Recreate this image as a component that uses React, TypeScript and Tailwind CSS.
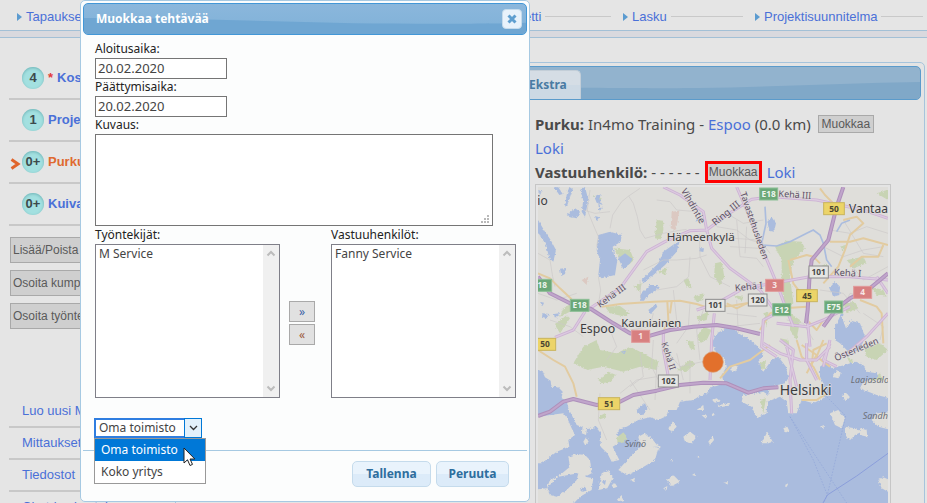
import React from "react";

const humanist = "font-['Noto_Sans','Open_Sans',sans-serif]";

function NavItem({ label, className }: { label: string; className: string }) {
  return (
    <li className={`flex items-center ${className}`}>
      <span className="mr-1 h-0 w-0 border-y-4 border-l-5 border-y-transparent border-l-[#5b9bd0]" />
      <a href="#" className="text-[13px] leading-4 text-[#4a70d8]">{label}</a>
      <span className="ml-1 h-px flex-1 bg-[#c9c9c9]" />
    </li>
  );
}

function Stage({ count, label, active, required }: { count: string; label: string; active?: boolean; required?: boolean }) {
  return (
    <li className="flex h-[42px] items-center border-b-2 border-[#c8c8c8]">
      <span className="flex w-[13px] items-center pt-1">
        {active && (
          <svg width="11" height="12" viewBox="0 0 11 12" className="ml-px">
            <path d="M1.5 1.5 L8 6 L1.5 10.5" fill="none" stroke="#e0652c" strokeWidth="3" />
          </svg>
        )}
      </span>
      <span className="flex size-[22px] items-center justify-center rounded-full bg-[#a3e0e0] text-[13px] font-bold text-[#3c4a4c] shadow-[inset_0_1px_3px_#6fb3b6]">
        {count}
      </span>
      {required && <span className="ml-1 text-[13px] font-bold text-[#e23b3b]">*</span>}
      <a href="#" className={`ml-1 text-[13px] font-bold ${active ? "text-[#df6a30]" : "text-[#4a70d8]"}`}>{label}</a>
    </li>
  );
}

function Chevron({ up, color }: { up?: boolean; color: string }) {
  return (
    <svg width="10" height="7" viewBox="0 0 10 7">
      <path d={up ? "M1.5 5.5 L5 2 L8.5 5.5" : "M1.5 1.5 L5 5 L8.5 1.5"} fill="none" stroke={color} strokeWidth="2" />
    </svg>
  );
}

function PeopleList({ id, label, person }: { id: string; label: string; person: string }) {
  return (
    <div className="w-[185px]">
      <label htmlFor={id} className="block h-[18px] leading-[18px]">{label}</label>
      <div className="flex h-[154px] border border-[#7f7f88] bg-white">
        <select id={id} size={8} className="h-full min-w-0 flex-1 appearance-none overflow-hidden bg-none pl-px text-[12px] text-[#444] outline-none">
          <option className="h-[18px] px-[2px] leading-[18px]">{person}</option>
        </select>
        <div className="flex w-4 flex-col items-center justify-between bg-[#f0f0f0] py-[5px]">
          <Chevron up color="#bcbcbc" />
          <Chevron color="#bcbcbc" />
        </div>
      </div>
    </div>
  );
}

type Shield = { x: number; y: number; w: number; t: string; k: "g" | "y" | "r" | "w" };
const shields: Shield[] = [
  { x: 30, y: 317, w: 70, t: "E18", k: "g" },
  { x: 149, y: 377, w: 56, t: "E18", k: "g" },
  { x: 556, y: 377, w: 58, t: "101", k: "w" },
  { x: 332, y: 470, w: 54, t: "1", k: "r" },
  { x: 45, y: 494, w: 64, t: "50", k: "y" },
  { x: 716, y: 43, w: 54, t: "E18", k: "g" },
  { x: 912, y: 87, w: 62, t: "50", k: "y" },
  { x: 866, y: 277, w: 58, t: "101", k: "w" },
  { x: 734, y: 317, w: 54, t: "3", k: "r" },
  { x: 683, y: 361, w: 56, t: "120", k: "w" },
  { x: 831, y: 348, w: 62, t: "45", k: "y" },
  { x: 755, y: 390, w: 54, t: "E12", k: "g" },
  { x: 911, y: 382, w: 54, t: "E75", k: "g" },
  { x: 998, y: 338, w: 54, t: "4", k: "r" },
  { x: 415, y: 604, w: 60, t: "102", k: "w" },
  { x: 237, y: 672, w: 64, t: "51", k: "y" },
];
const shieldFill = { g: "#6ba878", y: "#ecd468", r: "#d88080", w: "#e6e6e3" };
const shieldStroke = { g: "#8cbf95", y: "#c9b45c", r: "#e29a9a", w: "#8d8d8d" };
const shieldText = { g: "#eef5ee", y: "#4a4632", r: "#f7e6e6", w: "#484848" };

const minorRoads = [
  "M240 145 L248 105 L275 65 L296 48 L310 70 L322 110 L330 150 L345 175",
  "M180 30 L172 90 L188 130 L205 170 L200 200",
  "M24 220 L60 240 L68 290 L75 320",
  "M205 290 L212 330 L205 375", "M296 48 L330 25", "M160 90 L195 100 L240 95",
  "M345 175 L400 160 L455 150 L470 148", "M340 270 L400 240 L440 240 L500 235 L530 225",
  "M380 60 L420 65 L440 90 L500 95", "M480 230 L476 290 L440 320 L380 330",
  "M508 160 L510 230 L540 290 L600 320", "M560 140 L620 150 L660 180 L700 190",
  "M590 100 L640 130 L700 120", "M620 120 L630 230 L680 235 L700 260",
  "M650 140 L645 220", "M600 200 L690 205", "M610 175 L690 180 L720 220",
  "M330 300 L332 360", "M430 330 L440 420", "M480 370 L475 440 L440 490", "M370 400 L360 440 L300 450",
  "M520 390 L500 450 L510 540", "M620 360 L625 460", "M590 400 L680 410", "M600 440 L690 430",
  "M370 480 L365 560 L395 620", "M400 500 L450 560 L540 540", "M330 520 L340 590 L300 620",
  "M210 640 L205 720 L230 780", "M270 640 L320 600 L380 590", "M300 600 L360 690",
  "M380 560 L375 660", "M440 520 L460 600", "M480 540 L480 640",
  "M770 420 L820 430 L850 480", "M900 150 L960 160 L1010 140 L1074 160", "M940 120 L1000 220 L1060 230",
  "M960 250 L1000 300 L1074 260", "M870 330 L940 340 L990 400", "M1000 400 L1060 440 L1050 480",
  "M930 400 L960 340 L1000 350", "M880 200 L940 230 L1000 210 L1060 200",
  "M24 340 L80 360 L140 340", "M60 420 L120 440 L160 470", "M240 450 L260 500 L230 540",
];

const yellowRoads = [
  "M24 280 L60 295 L90 325 L125 358",
  "M215 380 L270 372 L370 365 L450 362 L500 372 L530 382 L600 378 L650 370 L680 368",
  "M412 365 L415 420 L402 450", "M425 365 L420 400",
  "M24 510 L70 540 L105 560 L130 610 L140 650",
  "M780 240 L830 225 L850 230 L870 250", "M775 240 L790 310 L820 350",
  "M900 185 L960 185 L1000 175 L1074 195", "M870 25 L885 45 L910 70",
  "M940 120 L980 110 L1000 130 L960 165 L945 210 L925 260 L880 310",
  "M1060 195 L1045 230 L995 230 L960 260", "M830 380 L760 385 L720 400 L690 450",
  "M830 420 L860 450 L880 420 L930 395", "M570 595 L600 560 L660 540 L700 510 L720 495",
  "M800 480 L815 530 L850 560 L870 600", "M815 495 L860 525 L830 580", "M880 480 L860 530 L900 560",
  "M815 660 L860 660 L890 640", "M890 490 L850 510 L845 560", "M990 360 L1040 380 L1055 400 L1060 490",
  "M650 370 L620 385 L590 370",
];

const pinkRoads = [
  "M183 383 L270 325 L350 215 L405 185 L480 152 L530 150 L590 105 L665 58 L730 50 L860 60 L1000 90 L1074 115",
  "M400 21 L450 45 L520 95 L530 150", "M530 150 L545 205 L600 265 L690 330 L740 400",
  "M620 21 L650 90 L690 190 L740 310 L770 390 L790 440",
  "M500 390 L560 370 L640 325 L730 310 L840 290 L960 290 L1074 300",
  "M553 400 L545 480 L540 600", "M165 395 L130 450 L75 472",
  "M740 400 L700 420 L695 500 L740 530", "M740 430 L830 440 L880 420 L960 380",
  "M400 455 L400 510 L415 590", "M700 490 L750 520 L810 540 L860 540 L900 500",
  "M830 490 L830 540 L860 600", "M770 500 L800 620", "M750 480 L790 510 L780 600 L785 700",
  "M900 490 L880 540 L920 560", "M880 560 L900 480", "M940 530 L1010 470 L1074 400",
  "M1040 290 L1074 340", "M830 400 L840 500",
];

const motorways = [
  "M24 290 L60 340 L120 370 L183 387 L250 430 L300 460 L350 470 L420 450 L490 440 L560 435 L620 445 L690 462",
  "M24 708 L60 695 L100 665 L130 657 L200 675 L270 665 L310 645 L380 632 L450 615 L520 608 L590 610 L655 638 L700 625 L745 622",
  "M940 21 L920 80 L895 180 L845 240 L838 300 L833 390 L828 430",
  "M1074 280 L1020 325 L960 355 L920 385 L880 440",
];

const islands = [
  "M460 770 L480 755 L500 770 L485 790 L465 785 Z", "M415 745 L430 722 L440 740 L425 755 Z",
  "M265 870 L310 820 L345 790 L385 805 L375 840 L325 870 L290 885 Z",
  "M325 770 L345 760 L365 775 L385 800 L360 800 L330 790 Z",
  "M410 900 L430 885 L450 905 L425 918 Z", "M535 785 L548 768 L552 780 L540 795 Z", "M500 690 L520 675 L522 690 Z",
  "M545 705 L550 698 L556 708 Z", "M515 706 L530 704 L528 716 Z", "M563 675 L600 668 L597 677 L570 682 Z",
  "M160 785 L168 772 L176 785 L165 795 Z", "M205 930 L215 880 L235 870 L248 895 L232 925 Z",
  "M695 790 L712 755 L728 785 L715 790 Z", "M760 745 L772 740 L778 752 L766 758 Z",
  "M900 700 L925 690 L945 715 L935 745 L915 735 Z", "M945 740 L975 745 L995 755 L975 765 L960 780 L945 765 Z",
  "M580 908 L594 906 L592 914 Z", "M765 915 L775 910 L770 922 Z", "M486 885 L494 880 L496 888 Z",
  "M905 590 L920 570 L935 580 L925 595 Z", "M935 645 L950 640 L960 652 L945 660 Z",
  "M870 740 L882 735 L880 748 Z", "M545 660 L560 655 L570 664 L555 668 Z", "M655 660 L665 650 L672 662 Z",
  "M1045 900 L1060 892 L1074 898 L1074 935 L1055 925 Z", "M245 915 L255 910 L262 920 L250 925 Z",
  "M300 900 L315 893 L312 906 Z", "M500 830 L506 826 L508 834 Z", "M420 840 L428 836 L428 845 Z",
  "M260 960 L275 945 L280 965 Z", "M380 790 L392 800 L386 812 Z", "M610 555 L625 560 L615 575 L600 570 Z",
  "M990 745 L1010 750 L1012 770 L990 765 Z", "M400 925 L412 918 L410 930 Z",
];

const greens = [
  "M375 175 L380 120 L400 122 L400 150 L392 178 Z", "M250 205 L300 210 L312 240 L295 255 L270 235 Z",
  "M555 250 L575 245 L583 290 L570 315 L552 290 Z", "M460 300 L475 295 L485 325 L470 320 Z",
  "M490 350 L520 340 L520 360 L500 365 Z", "M100 385 L125 370 L130 390 L90 410 Z",
  "M75 435 L110 405 L120 415 L90 460 Z", "M225 380 L270 378 L300 400 L285 410 L240 400 Z",
  "M500 410 L535 395 L530 420 L510 425 Z", "M500 470 L520 440 L545 450 L530 480 L510 490 Z",
  "M130 550 L160 500 L200 480 L210 510 L260 520 L300 500 L330 515 L385 545 L380 570 L330 560 L280 575 L220 560 L170 570 Z",
  "M205 600 L235 575 L258 585 L240 605 L215 610 Z", "M470 480 L490 485 L495 510 L480 505 Z",
  "M440 570 L480 540 L495 550 L470 575 Z", "M60 715 L100 690 L100 705 L75 720 Z",
  "M205 710 L225 700 L228 712 L210 718 Z",
  "M735 200 L770 182 L815 185 L825 205 L790 240 L780 290 L790 370 L770 400 L755 330 L755 240 Z",
  "M930 200 L945 195 L945 215 Z", "M950 240 L1000 230 L1010 250 L970 265 Z", "M870 260 L890 250 L895 265 Z",
  "M700 400 L715 395 L710 440 Z", "M780 400 L810 420 L800 480 L780 450 Z", "M1020 320 L1060 330 L1070 350 L1040 345 Z",
  "M1000 500 L1050 490 L1074 510 L1040 540 L1010 530 Z", "M690 550 L708 540 L705 565 L690 570 Z",
  "M950 530 L970 540 L960 550 Z", "M1020 600 L1050 580 L1060 600 Z", "M990 320 L1010 325 L1000 330 Z",
  "M385 275 L412 262 L405 285 Z", "M310 320 L335 310 L330 335 Z", "M610 345 L640 350 L635 365 Z",
  "M190 45 L215 55 L205 70 Z", "M940 370 L975 365 L985 385 L950 400 Z", "M1040 40 L1074 30 L1074 60 Z",
  "M690 660 L708 655 L700 700 Z", "M750 475 L775 480 L780 505 L765 500 Z",
];

const lakes = [
  "M205 165 L240 155 L275 165 L272 185 L248 200 L252 225 L262 240 L255 285 L215 295 L205 285 L210 240 L200 210 Z",
  "M265 235 L285 220 L308 238 L300 250 L280 268 Z", "M24 120 L45 155 L62 180 L78 210 L70 245 L58 235 L48 195 L30 165 L24 160 Z",
  "M110 105 L135 85 L150 95 L140 115 L120 112 Z", "M150 30 L165 21 L175 60 L165 110 L155 95 L160 60 Z",
  "M118 21 L128 28 L112 75 L105 80 L110 45 Z", "M72 21 L85 22 L98 42 L88 45 Z", "M24 30 L35 35 L30 45 Z",
  "M193 50 L212 42 L208 60 L218 75 L200 68 Z", "M90 266 L108 264 L105 282 L94 288 Z",
  "M370 285 L340 310 L335 300 L385 250 L400 215 L450 180 L440 215 L405 255 Z",
  "M330 345 L360 315 L385 315 L385 325 L355 345 L345 362 L330 362 Z", "M355 390 L378 372 L382 380 L362 402 Z",
  "M508 205 L522 205 L520 216 L508 214 Z", "M38 400 L58 402 L50 415 L36 410 Z", "M72 402 L88 400 L84 412 L74 412 Z",
  "M30 365 L42 368 L38 378 Z", "M712 125 L725 112 L738 130 L732 155 L718 152 Z", "M495 125 L505 110 L512 120 Z",
  "M320 690 L345 670 L352 685 L340 705 L322 700 Z", "M272 515 L288 512 L284 522 Z",
  "M898 325 L915 305 L930 320 L928 345 L910 350 Z", "M205 70 L215 85 L208 95 Z", "M195 108 L208 112 L200 122 Z",
];

const places = [
  { x: 22, y: 75, s: 36, t: "io" }, { x: 410, y: 182, s: 35, t: "Hämeenkylä" }, { x: 150, y: 459, s: 37, t: "Espoo" },
  { x: 274, y: 441, s: 34, t: "Kauniainen" }, { x: 957, y: 99, s: 36, t: "Vantaa" }, { x: 749, y: 644, s: 42, t: "Helsinki" },
];

const roadNames = [
  { t: "Vihdintie", s: 28, m: "translate(452 32) rotate(60)" }, { t: "Ring III", s: 29, m: "translate(556 138) rotate(-39)" },
  { t: "Kehä III", s: 27, m: "translate(210 384) rotate(-36)" }, { t: "Kehä III", s: 27, m: "translate(745 50) rotate(4)" },
  { t: "Tavastehusleden", s: 27, m: "translate(630 40) rotate(71)" }, { t: "Kehä I", s: 28, m: "translate(911 286) rotate(3)" },
  { t: "Kehä I", s: 28, m: "translate(616 334) rotate(-6)" }, { t: "Kehä II", s: 26, m: "translate(394 490) rotate(72)" },
  { t: "Österleden", s: 27, m: "translate(918 544) rotate(-23)" },
];

const areaNames = [
  { x: 284, y: 800, t: "Svinö" }, { x: 962, y: 609, t: "Laajasalo" }, { x: 998, y: 716, t: "Sandhamn" },
];

function CityMap() {
  const land = "#dfdeda";
  const water = "#aabcde";
  return (
    <svg viewBox="24 21 1050 1050" className="block w-full font-['Noto_Sans',sans-serif]">
      <defs>
        <filter id="shoreline" x="0" y="0" width="1" height="1">
          <feTurbulence type="fractalNoise" baseFrequency="0.14" numOctaves="3" seed="4" />
          <feDisplacementMap in="SourceGraphic" scale="9" xChannelSelector="R" yChannelSelector="G" />
        </filter>
      </defs>
      <rect x="24" y="21" width="1050" height="1050" fill={land} />
      <g filter="url(#shoreline)">
        <rect x="0" y="0" width="1100" height="1100" fill={land} />
        <g fill="#c8d4b4">{greens.map((d) => <path key={d} d={d} />)}</g>
        <path d="M425 95 L448 92 L438 150 L422 145 Z M155 300 L175 290 L170 315 Z" fill="#dcc9c2" />
        <g fill={water}>{lakes.map((d) => <path key={d} d={d} />)}</g>
        <path
          fill={water}
          d="M0 568 L36 572 L45 592 L62 602 L64 620 L85 622 L98 635 L95 655 L110 662 L115 685 L140 735 L158 742 L155 760 L168 765 L172 742 L185 750 L198 738 L212 755 L212 800 L232 820 L245 845 L268 840 L258 820 L248 800 L265 790 L270 770 L258 765 L270 745 L290 740 L325 720 L360 712 L385 720 L410 708 L415 690 L440 690 L450 665 L490 660 L505 650 L530 640 L545 620 L560 618 L582 610 L575 585 L590 560 L582 535 L560 520 L545 490 L560 460 L580 450 L600 435 L625 460 L660 480 L690 505 L700 525 L685 545 L700 575 L725 540 L745 530 L768 560 L775 595 L765 610 L720 620 L715 645 L700 635 L680 640 L640 645 L635 665 L665 680 L680 712 L710 700 L712 665 L750 650 L770 665 L775 700 L800 700 L815 660 L850 670 L880 655 L890 630 L870 590 L870 560 L890 545 L905 565 L945 555 L975 545 L1000 555 L1010 575 L1040 580 L1045 590 L1000 605 L990 625 L1015 635 L1040 645 L1100 660 L1100 695 L1040 700 L1025 720 L1045 740 L1100 755 L1100 1100 L0 1100 Z"
        />
        <path d="M915 440 L935 400 L955 420 L990 430 L1005 470 L990 510 L960 520 L930 490 L915 480 Z" fill={water} />
        <path d="M935 410 L950 400 L962 430 L948 445 Z" fill={land} />
        <g fill={land}>
          <path d="M0 715 L60 705 L100 700 L112 715 L125 745 L135 765 L115 780 L118 800 L80 815 L55 835 L35 850 L0 850 Z" />
          <path d="M50 925 L60 900 L90 885 L120 860 L115 830 L140 822 L165 825 L180 840 L185 880 L165 890 L190 895 L185 930 L150 950 L130 971 L0 1071 L0 930 Z" />
          {islands.map((d) => <path key={d} d={d} />)}
        </g>
        <path d="M50 925 L85 890 L115 885 L145 880 L140 900 L110 930 L80 950 L60 945 Z M150 925 L165 920 L170 932 L155 935 Z M215 905 L228 900 L225 915 Z" fill={water} />
        <path d="M258 775 L280 757 L292 772 L280 788 L262 785 Z" fill="#c8d4b4" />
      </g>
      <g fill="none" stroke="#cbc9c9" strokeWidth="2">{minorRoads.map((d) => <path key={d} d={d} />)}</g>
      <path d="M695 195 L740 198 L780 185 L830 160 L850 150 L870 165 L880 190 L890 240 L905 260 M705 80 L708 130 L695 190 M920 155 L935 130 L960 120" fill="none" stroke={water} strokeWidth="5" />

      <g fill="none" stroke="#8fa4d8" strokeWidth="2" strokeDasharray="5 4">
        <path d="M780 710 L850 840 L892 945" /><path d="M780 710 L845 810 L950 969" />
        <path d="M890 650 L947 708 L892 945 L878 975" />
      </g>
      <path d="M878 971 L892 945 L980 888 L1074 820" fill="none" stroke="#8b9edb" strokeWidth="3" />

      <g fill="none" strokeLinejoin="round">
        <g stroke="#e2cba0" strokeWidth="6">{yellowRoads.map((d) => <path key={d} d={d} />)}</g>
        <g stroke="#cdb2d4" strokeWidth="9">{pinkRoads.map((d) => <path key={d} d={d} />)}</g>
        <g stroke="#dccbe0" strokeWidth="4">{pinkRoads.map((d) => <path key={d} d={d} />)}</g>
        <g stroke="#ae90bb" strokeWidth="12">{motorways.map((d) => <path key={d} d={d} />)}</g>
        <g stroke="#c0a5cb" strokeWidth="6">{motorways.map((d) => <path key={d} d={d} />)}</g>
      </g>

      {shields.map((s) => (
        <g key={`${s.t}-${s.x}`}>
          <rect x={s.x - s.w / 2} y={s.y - 19} width={s.w} height="36" fill={shieldFill[s.k]} stroke={shieldStroke[s.k]} strokeWidth="3" />
          <text x={s.x} y={s.y + 8} fontSize="25" fontWeight="700" textAnchor="middle" fill={shieldText[s.k]}>{s.t}</text>
        </g>
      ))}
      <g fill="#5c4e64" stroke="#e0dfdd" strokeWidth="3" paintOrder="stroke">
        {roadNames.map((r) => <text key={r.m} transform={r.m} fontSize={r.s}>{r.t}</text>)}
      </g>
      <g fill="#3c3c3e" stroke="#e0dfdd" strokeWidth="4" paintOrder="stroke">
        {places.map((p) => <text key={p.t} x={p.x} y={p.y} fontSize={p.s}>{p.t}</text>)}
      </g>
      <g fill="#6c6f78" fontStyle="italic" fontSize="27">
        {areaNames.map((a) => <text key={a.t} x={a.x} y={a.y}>{a.t}</text>)}
      </g>
      <circle cx="549" cy="546" r="31" fill="#e2702c" stroke="#d9a27c" strokeWidth="2" />
    </svg>
  );
}

function BarSheen({ color, d }: { color: string; d: string }) {
  return (
    <svg viewBox="0 0 100 32" preserveAspectRatio="none" className="absolute inset-0 h-full w-full">
      <path d={d} fill={color} />
    </svg>
  );
}

const smallButton = "border border-[#a9a9a9] bg-[#cfcfcf] text-[12px] text-[#5a5a5a]";
const dialogButton =
  "h-[26px] rounded-[5px] border border-[#c5dbec] bg-linear-to-b from-[#e9f3fc] from-50% to-[#dcebf9] to-50% text-[12px] font-bold text-[#2e6e9e]";

function EditDialog() {
  return (
    <div role="dialog" aria-labelledby="dialog-title" className={`absolute top-0 left-20 w-[450px] rounded-[5px] border border-[#a6c9e2] bg-[#fcfdfd] p-[2px] text-[12px] text-[#222] ${humanist}`}>
      <div className="relative flex h-8 items-center justify-between overflow-hidden rounded-[5px] border border-[#4297d7] bg-linear-to-b from-[#8bb7dc] to-[#7fb1d8] pr-1 pl-3">
        <BarSheen color="#6fa6d2" d="M0 15 C30 15 50 21 75 21 C88 21 95 21 100 20 V32 H0 Z" />
        <h2 id="dialog-title" className="relative text-[12px] font-bold text-white">Muokkaa tehtävää</h2>
        <button aria-label="Sulje" className="relative flex size-5 items-center justify-center rounded-[4px] border border-[#c5dbec] bg-[#e8f2fb]">
          <svg width="10" height="10" viewBox="0 0 10 10"><path d="M1.5 1.5 L8.5 8.5 M8.5 1.5 L1.5 8.5" stroke="#5f9fd0" strokeWidth="3" /></svg>
        </button>
      </div>

      <form className="pt-[6px] pr-[10px] pl-3" onSubmit={(e) => e.preventDefault()}>
        <label htmlFor="start" className="block h-[17px] leading-4">Aloitusaika:</label>
        <input id="start" defaultValue="20.02.2020" className="block h-[21px] w-[132px] border border-[#757575] bg-white px-[2px] pb-[2px] text-[13px] text-[#444]" />
        <label htmlFor="end" className="block h-[17px] leading-4">Päättymisaika:</label>
        <input id="end" defaultValue="20.02.2020" className="block h-[21px] w-[132px] border border-[#757575] bg-white px-[2px] pb-[2px] text-[13px] text-[#444]" />
        <label htmlFor="desc" className="block h-[17px] leading-4">Kuvaus:</label>
        <div className="relative w-[398px]">
          <textarea id="desc" className="block h-[92px] w-full resize-none border border-[#757575] bg-white" />
          <svg width="8" height="8" viewBox="0 0 8 8" fill="#b9b9b9" className="absolute right-1 bottom-[3px]">
            <path d="M6 0h2v2h-2z M3 3h2v2h-2z M6 3h2v2h-2z M0 6h2v2h-2z M3 6h2v2h-2z M6 6h2v2h-2z" />
          </svg>
        </div>

        <div className="flex items-start">
          <PeopleList id="workers" label="Työntekijät:" person="M Service" />
          <div className="mt-[75px] mr-4 ml-[9px] flex w-[26px] flex-col gap-[2px]">
            <button aria-label="Siirrä oikealle" className="h-[21px] border border-[#a9a9a9] bg-[#e1e1e1] leading-4 text-[#3d62a8]">»</button>
            <button aria-label="Siirrä vasemmalle" className="h-[21px] border border-[#a9a9a9] bg-[#e1e1e1] leading-4 text-[#9c5a3c]">«</button>
          </div>
          <PeopleList id="owners" label="Vastuuhenkilöt:" person="Fanny Service" />
        </div>

        <div className="relative mt-5 -ml-px w-[108px]">
          <select aria-label="Toimisto" className="block h-5 w-full appearance-none border-2 border-[#2f7de0] bg-white pl-[3px] text-[12px] leading-4 text-[#444] outline-none">
            <option>Oma toimisto</option>
            <option>Koko yritys</option>
          </select>
          <span className="pointer-events-none absolute inset-y-0 right-0 flex w-[18px] items-center justify-center border border-[#0078d7] bg-[#e3f1fb]">
            <svg width="9" height="6" viewBox="0 0 9 6"><path d="M1 1 L4.5 4.5 L8 1" fill="none" stroke="#333" strokeWidth="1.3" /></svg>
          </span>
          <ul role="listbox" aria-label="Toimistot" className="absolute top-5 left-0 z-10 w-28 border border-[#999] bg-white text-[12px] leading-[22px] text-[#444]">
            <li role="option" aria-selected="true" className="bg-[#0078d7] pl-[6px] text-white">Oma toimisto</li>
            <li role="option" aria-selected="false" className="pl-[6px]">Koko yritys</li>
          </ul>
          <svg width="13" height="20" viewBox="0 0 13 20" className="absolute top-[29px] left-[89px] z-20">
            <path d="M1 1 V16 L4.5 12.8 L7 18.5 L9.5 17.4 L7 12 H11.8 Z" fill="#fff" stroke="#222" />
          </svg>
        </div>
      </form>

      <div className="mt-3 flex justify-end gap-[5px] border-t border-[#a6c9e2] pt-[10px] pr-[18px] pb-3">
        <button className={`w-[79px] ${dialogButton}`}>Tallenna</button>
        <button className={`w-[73px] ${dialogButton}`}>Peruuta</button>
      </div>
    </div>
  );
}

export default function App() {
  return (
    <div className="relative h-screen overflow-hidden bg-[#e5e5e5] font-['Liberation_Sans',Arial,sans-serif]">
      <header className="h-[38px] border-b border-[#a3c0d6]">
        <nav className="flex h-[31px] items-center border-b border-[#a3c0d6] pt-[3px] pl-[17px]">
          <ul className="flex flex-1">
            <NavItem label="Tapaukset" className="flex-1 pr-3" />
            <NavItem label="Budjetti" className="w-[134px] pr-3" />
            <NavItem label="Lasku" className="w-[132px] pr-3" />
            <NavItem label="Projektisuunnitelma" className="w-[172px] pr-1" />
          </ul>
        </nav>
        <div className="h-[6px] bg-[#d9d9de]" />
      </header>

      <div className="flex">
        <aside className="w-[175px] pt-5 pl-[9px]">
          <ul>
            <Stage count="4" label="Kosteus" required />
            <Stage count="1" label="Projekti" />
            <Stage count="0+" label="Purku" active />
            <Stage count="0+" label="Kuivaus" />
          </ul>
          <div className="mt-[11px] ml-px flex flex-col items-start gap-[7px]">
            {["Lisää/Poista", "Osoita kumppani", "Osoita työntekijä"].map((t) => (
              <button key={t} className={`h-[26px] w-36 px-[2px] text-left ${smallButton}`}>{t}</button>
            ))}
          </div>
          <ul className="mt-[67px]">
            {["Luo uusi Mittaus", "Mittaukset", "Tiedostot", "Chat-keskustelu"].map((t) => (
              <li key={t} className="flex h-8 items-center border-b-2 border-[#c8c8c8] pl-[13px] text-[13px]">
                <a href="#" className="text-[#4a70d8]">{t}</a>
              </li>
            ))}
          </ul>
        </aside>

        <main className={`mt-6 mr-[2px] flex-1 rounded-[5px] border border-[#a6c4dc] bg-[#e4e4e4] p-[3px] ${humanist}`}>
          <div className="relative flex h-[34px] items-end overflow-hidden rounded-[5px] border border-[#5b9bcb] bg-[#92b3ce] pl-[337px]">
            <BarSheen color="#80a8c8" d="M0 18 C30 18 60 22 70 21 C80 20 90 16 100 15 V32 H0 Z" />
            <button className="relative h-[29px] w-[64px] rounded-t-[5px] border border-b-0 border-[#c3ced8] bg-linear-to-b from-[#d5dde5] from-50% to-[#cdd9e4] to-50% pl-[11px] text-left text-[12px] font-bold text-[#4a7ba3]">Ekstra</button>
          </div>

          <div className="flex justify-end pt-3 pr-[30px] text-[15px] leading-6 text-[#4a4a4a]">
            <section className="w-[356px]">
              <div className="flex flex-wrap items-center gap-x-[7px]">
                <p><strong>Purku:</strong> In4mo Training - <a href="#" className="text-[#4a70d8]">Espoo</a> (0.0 km)</p>
                <button className={`h-[18px] w-14 leading-4 font-['Liberation_Sans',Arial,sans-serif] ${smallButton}`}>Muokkaa</button>
                <a href="#" className="text-[#4a70d8]">Loki</a>
              </div>
              <div className="flex h-6 items-center gap-x-[5px]">
                <p><strong>Vastuuhenkilö:</strong> - - - - - -</p>
                <button className="h-[22px] w-[57px] border-3 border-[#f00] bg-[#cfcfcf] font-['Liberation_Sans',Arial,sans-serif] text-[12px] leading-4 text-[#5a5a5a]">Muokkaa</button>
                <a href="#" className="text-[#4a70d8]">Loki</a>
              </div>
              <div className="border border-[#c6c6c6] p-[2px]">
                <CityMap />
              </div>
            </section>
          </div>
        </main>
      </div>

      <EditDialog />
    </div>
  );
}
